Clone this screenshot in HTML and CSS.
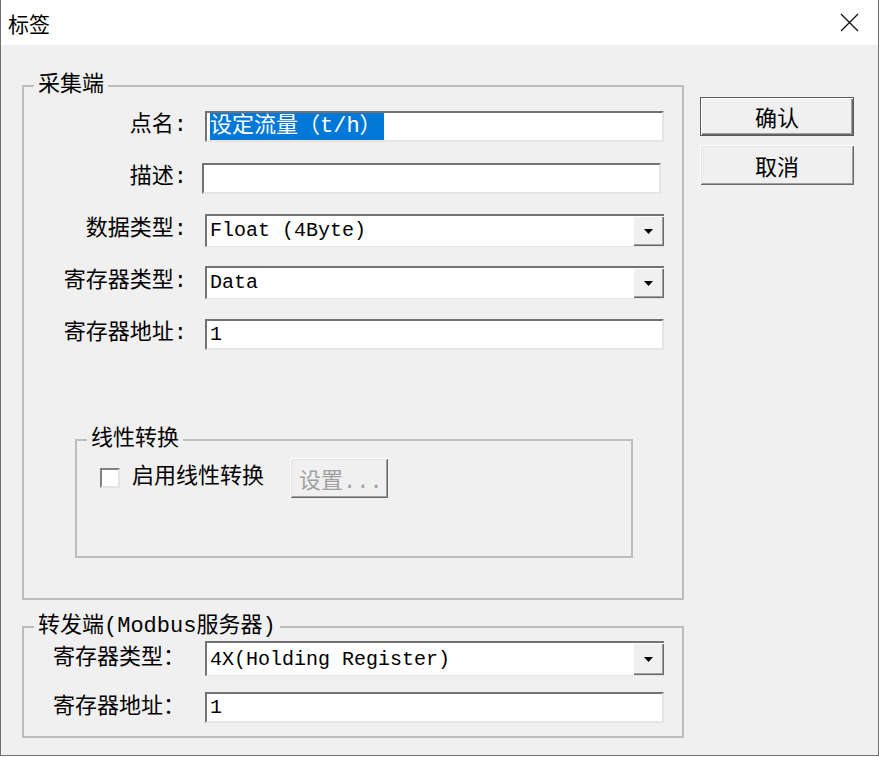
FILE: index.html
```html
<!DOCTYPE html>
<html lang="zh-CN">
<head>
  <meta charset="UTF-8" />
  <title>标签</title>
  <link rel="stylesheet" href="styles.css">
</head>
<body>

  <div class="window">
    <div class="titlebar">
      <span class="title">标签</span>
      <svg class="close" width="19" height="19" viewBox="0 0 19 19">
        <path d="M1 1L18 18M18 1L1 18" stroke="#111" stroke-width="1.3" fill="none" />
      </svg>
    </div>

    <div class="dialog">
      <div class="groups">

        <fieldset class="group group-collect">
          <legend>采集端</legend>
          <div class="form-grid">
            <label>点名:</label>
            <div class="field"><span class="selected">设定流量（t/h）</span></div>

            <label>描述:</label>
            <div class="field field-shift"></div>

            <label>数据类型:</label>
            <div class="combo">
              <span class="combo-value">Float (4Byte)</span>
              <span class="combo-btn"><svg width="9" height="5" viewBox="0 0 9 5"><polygon points="0,0 9,0 4.5,5" fill="#000" /></svg></span>
            </div>

            <label>寄存器类型:</label>
            <div class="combo">
              <span class="combo-value">Data</span>
              <span class="combo-btn"><svg width="9" height="5" viewBox="0 0 9 5"><polygon points="0,0 9,0 4.5,5" fill="#000" /></svg></span>
            </div>

            <label>寄存器地址:</label>
            <div class="field"><span class="field-value">1</span></div>
          </div>

          <fieldset class="group group-linear">
            <legend>线性转换</legend>
            <div class="check-row">
              <span class="checkbox"></span>
              <span class="check-label">启用线性转换</span>
              <button class="btn btn-disabled" disabled>设置...</button>
            </div>
          </fieldset>
        </fieldset>

        <fieldset class="group group-forward">
          <legend>转发端(Modbus服务器)</legend>
          <div class="form-grid form-grid-left">
            <label>寄存器类型：</label>
            <div class="combo combo-tall">
              <span class="combo-value">4X(Holding Register)</span>
              <span class="combo-btn"><svg width="9" height="5" viewBox="0 0 9 5"><polygon points="0,0 9,0 4.5,5" fill="#000" /></svg></span>
            </div>

            <label>寄存器地址：</label>
            <div class="field"><span class="field-value">1</span></div>
          </div>
        </fieldset>

      </div>

      <div class="actions">
        <button class="btn btn-default">确认</button>
        <button class="btn btn-cancel">取消</button>
      </div>
    </div>
  </div>

</body>
</html>
```

FILE: styles.css
```css
* {
  box-sizing: border-box;
}

html,
body {
  margin: 0;
  background: #fff;
}

.window {
  width: 879px;
  height: 756px;
  border: 1px solid #6f6f6f;
  border-top: 0;
  background-color: #f0f0f0;
  font-family: "Liberation Mono", "Noto Sans CJK SC", monospace;
  font-size: 22px;
  color: #000;
}

.titlebar {
  height: 45px;
  background: #fff;
  display: flex;
  align-items: center;
  justify-content: space-between;
  padding: 0 19px 0 7px;
}

.title {
  font-family: "Noto Sans CJK SC", sans-serif;
  font-size: 21px;
  line-height: 24px;
}

.close {
  display: block;
}

.dialog {
  display: flex;
  gap: 16px;
  padding: 29px 0 0 21px;
}

.groups {
  width: 662px;
}

/* etched group boxes */
.group {
  margin: 0;
  padding: 0;
  min-width: 0;
  border: 2px solid #bdbdbd;
}

.group legend {
  margin-left: 10px;
  padding: 0 4px;
  line-height: 24px;
  height: 24px;
}

.group-collect {
  height: 526px;
}

.group-forward {
  margin-top: 15px;
  height: 123px;
}

.group-linear {
  margin: 68px 0 0 51px;
  width: 558px;
  height: 130px;
}

.form-grid {
  display: grid;
  grid-template-columns: 163px 459px;
  grid-auto-rows: 52px;
  column-gap: 18px;
  align-items: center;
  margin-top: 2px;
}

.form-grid label {
  text-align: right;
  line-height: 24px;
  white-space: nowrap;
}

.form-grid-left {
  grid-template-columns: 152px 459px;
  grid-auto-rows: auto;
  column-gap: 0;
  row-gap: 16px;
  padding-left: 29px;
  margin-top: 2px;
}

.form-grid-left label {
  text-align: left;
}

/* sunken edit boxes */
.field {
  height: 31px;
  background: #fff;
  border-style: solid;
  border-width: 2px;
  border-color: #737373 #e4e4e4 #e4e4e4 #737373;
  display: flex;
  align-items: center;
  padding-left: 3px;
  font-size: 20px;
}

.field-shift {
  margin: 0 3px 0 -3px;
}

.selected {
  background: #0078d7;
  color: #fff;
  font-size: 22px;
  line-height: 27px;
  padding-right: 2px;
}

.combo {
  height: 33px;
  background: #fff;
  border-style: solid;
  border-width: 2px 0 1px 2px;
  border-color: #737373 #e4e4e4 #e4e4e4 #737373;
  display: flex;
  align-items: stretch;
  font-size: 20px;
}

.combo-tall {
  height: 35px;
}

.combo-value {
  flex: 1;
  display: flex;
  align-items: center;
  padding-left: 3px;
  white-space: pre;
}

.combo-btn {
  width: 31px;
  background: #f0f0f0;
  display: flex;
  align-items: center;
  justify-content: center;
  box-shadow: inset 1px 1px 0 #fff, inset -1px -1px 0 #6a6a6a, inset -2px -2px 0 #a0a0a0;
}

.combo-btn svg {
  display: block;
  margin-top: 1px;
}

/* check box row */
.check-row {
  display: flex;
  align-items: center;
  margin-top: 6px;
  padding-left: 23px;
}

.checkbox {
  width: 20px;
  height: 20px;
  background: #fff;
  border-style: solid;
  border-width: 2px;
  border-color: #808080 #e4e4e4 #e4e4e4 #808080;
}

.check-label {
  margin-left: 12px;
  line-height: 24px;
}

/* push buttons */
.btn {
  font-family: inherit;
  font-size: 22px;
  color: #000;
  background: #f0f0f0;
  border: none;
  padding: 0;
  box-shadow: inset 1px 1px 0 #fff, inset -1px -1px 0 #696969, inset 2px 2px 0 #e3e3e3, inset -2px -2px 0 #a0a0a0;
}

.btn-disabled {
  margin-left: 26px;
  width: 98px;
  height: 40px;
  color: #a0a0a0;
  text-align: left;
  padding-left: 9px;
}

.actions {
  display: flex;
  flex-direction: column;
  gap: 9px;
  margin-top: 23px;
}

.actions .btn {
  width: 154px;
  height: 39px;
}

.actions .btn-cancel {
  height: 40px;
}

.btn-default {
  border: 1px solid #5a5a5a;
  box-shadow: inset 1px 1px 0 #fff, inset -1px -1px 0 #696969, inset -2px -2px 0 #a0a0a0;
}
```
